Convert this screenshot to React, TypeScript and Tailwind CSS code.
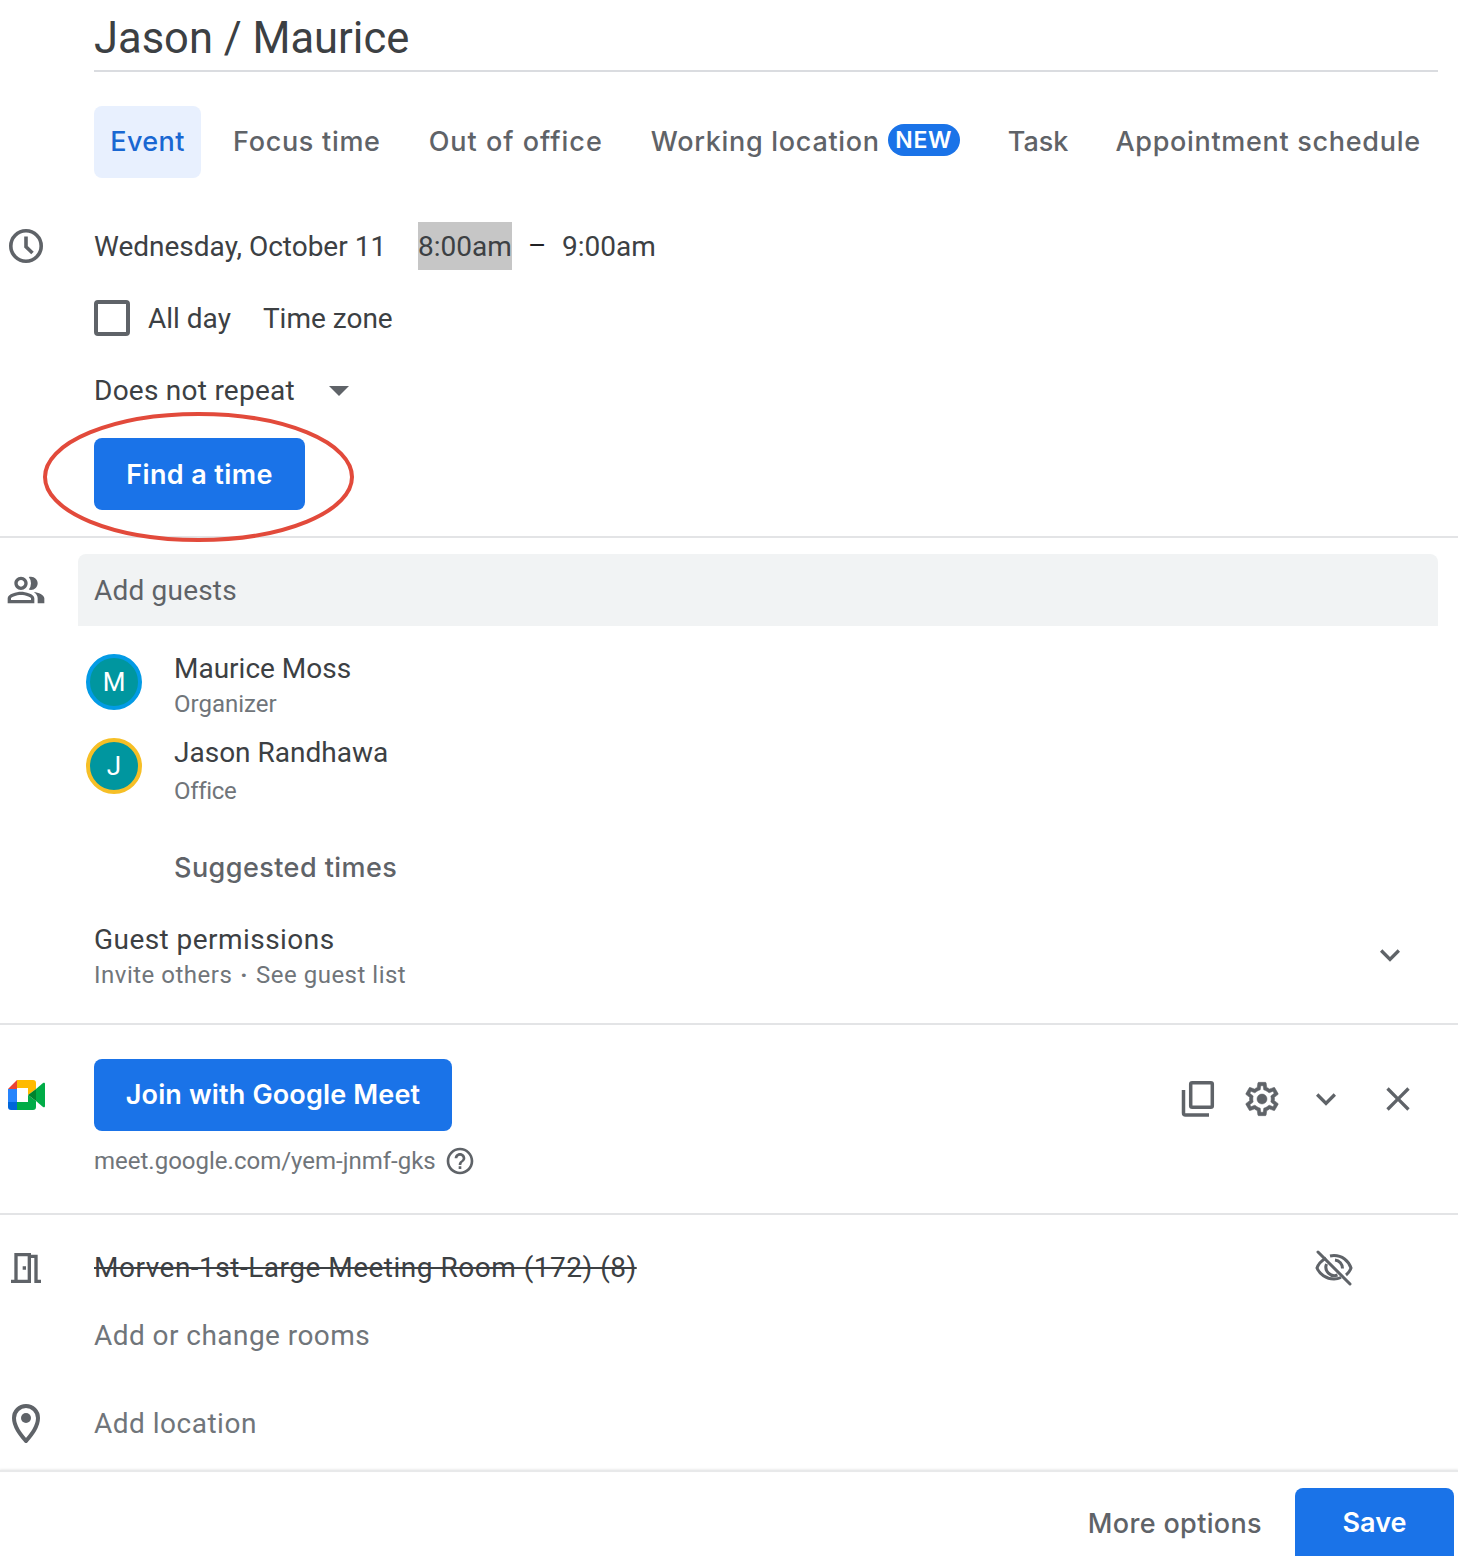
import {
  MdArrowDropDown,
  MdClose,
  MdHelpOutline,
  MdKeyboardArrowDown,
  MdOutlineMeetingRoom,
  MdOutlinePeopleAlt,
} from 'react-icons/md';

function ClockIcon() {
  return (
    <svg width="40" height="40" viewBox="0 0 40 40" fill="none" stroke="#5f6368" strokeWidth="3.6">
      <circle cx="20" cy="20" r="15.200" />
      <path d="M20 10.500v10.300l6.500 6.200" />
    </svg>
  );
}

function MeetLogo() {
  return (
    <svg width="37" height="30" viewBox="0 0 37 30">
      <path d="M0 9 9 0v9z" fill="#ea4335" />
      <path d="M9 0h16a3 3 0 0 1 3 3v6l-8 6V8H9z" fill="#ffba00" />
      <path d="M0 9h9v13H0z" fill="#2684fc" />
      <path d="M0 22h9v8H3a3 3 0 0 1-3-3z" fill="#0066da" />
      <path d="M9 22h11v-7l8 6v6a3 3 0 0 1-3 3H9z" fill="#00ac47" />
      <path d="M20 15l8-6v12z" fill="#00832d" />
      <path d="M28 9l7-6c1-.7 2-.3 2 1v22c0 1.300-1 1.700-2 1l-7-6z" fill="#00ac47" />
    </svg>
  );
}

function CopyIcon() {
  return (
    <svg width="40" height="40" viewBox="0 0 40 40" fill="none" stroke="#5f6368" strokeWidth="3.5">
      <rect x="12.7" y="3.700" width="21.6" height="24.6" rx="1.5" />
      <path d="M5.500 11v23a2 2 0 0 0 2 2H31" />
    </svg>
  );
}

function GearIcon() {
  return (
    <svg width="40" height="40" viewBox="0 0 24 24" fill="#5f6368" stroke="#5f6368" strokeWidth="0.3">
      <path d="M19.43 12.98c.04-.32.07-.64.07-.98 0-.34-.03-.66-.07-.98l2.11-1.65c.19-.15.24-.42.12-.64l-2-3.46c-.09-.16-.26-.25-.44-.25-.06 0-.12.01-.17.03l-2.49 1c-.52-.4-1.08-.73-1.69-.98l-.38-2.65C14.46 2.18 14.25 2 14 2h-4c-.25 0-.46.18-.49.42l-.38 2.65c-.61.25-1.17.59-1.69.98l-2.49-1c-.06-.02-.12-.03-.18-.03-.17 0-.34.09-.43.25l-2 3.46c-.13.22-.07.49.12.64l2.11 1.65c-.04.32-.07.65-.07.98 0 .33.03.66.07.98l-2.11 1.65c-.19.15-.24.42-.12.64l2 3.46c.09.16.26.25.44.25.06 0 .12-.01.17-.03l2.49-1c.52.4 1.08.73 1.69.98l.38 2.65c.03.24.24.42.49.42h4c.25 0 .46-.18.49-.42l.38-2.65c.61-.25 1.17-.59 1.69-.98l2.49 1c.06.02.12.03.18.03.17 0 .34-.09.43-.25l2-3.46c.12-.22.07-.49-.12-.64l-2.11-1.65zm-1.98-1.71c.04.31.05.52.05.73 0 .21-.02.43-.05.73l-.14 1.13.89.7 1.08.84-.7 1.21-1.27-.51-1.04-.42-.9.68c-.43.32-.84.56-1.25.73l-1.06.43-.16 1.13-.2 1.35h-1.4l-.19-1.35-.16-1.13-1.06-.43c-.43-.18-.83-.41-1.23-.71l-.91-.7-1.06.43-1.27.51-.7-1.21 1.08-.84.89-.7-.14-1.13c-.03-.31-.05-.54-.05-.74s.02-.43.05-.73l.14-1.13-.89-.7-1.08-.84.7-1.21 1.27.51 1.04.42.9-.68c.43-.32.84-.56 1.25-.73l1.06-.43.16-1.13.2-1.35h1.39l.19 1.35.16 1.13 1.06.43c.43.18.83.41 1.23.71l.91.7 1.06-.43 1.27-.51.7 1.21-1.07.85-.89.7.14 1.13z" />
      <circle cx="12" cy="12" r="3" />
    </svg>
  );
}

function PlaceIcon() {
  return (
    <svg width="28" height="40" viewBox="0 0 28 40" fill="none">
      <path d="M14 37C9 31 2 23 2 14a12 12 0 0 1 24 0c0 9-7 17-12 23z" stroke="#5f6368" strokeWidth="4" strokeLinejoin="round" />
      <circle cx="14" cy="14" r="5" fill="#5f6368" />
    </svg>
  );
}

function EyeOff() {
  return (
    <svg width="38" height="38" viewBox="0 0 38 38" fill="none" stroke="#5f6368" strokeWidth="3">
      <path d="M3 3l32 32" strokeLinecap="round" />
      <path d="M11 9C6 12 3 16 2 19c2.500 6 9 11 17 11 3 0 5-.6 7-1.500" />
      <path d="M15 7c1.300-.3 2.700-.5 4-.5 8 0 14.500 5 17 12.500-1 2.800-2.700 5.200-5 7" />
      <path d="M11.500 15a8.500 8.500 0 0 0 11 11" />
      <path d="M20 11a8.500 8.500 0 0 1 7.500 8.500" />
    </svg>
  );
}

function Person({ initial, ring, name, role, roleCls }: { initial: string; ring: string; name: string; role: string; roleCls: string }) {
  return (
    <div className="flex h-[84px] pl-[86px]">
      <div className={`mt-[14px] flex h-[56px] w-[56px] items-center justify-center rounded-full border-[4px] bg-[#00969f] text-[26px] text-white ${ring}`}>
        {initial}
      </div>
      <div className="ml-[32px] pt-[11px]">
        <div className="h-[36px] text-[28px] leading-[36px] text-[#3c4043]">{name}</div>
        <div className={`text-[24px] leading-[36px] text-[#70757a] ${roleCls}`}>{role}</div>
      </div>
    </div>
  );
}

export default function App() {
  return (
    <div className="relative h-[1556px] w-[1458px] overflow-hidden bg-white font-['Roboto',sans-serif] text-[#3c4043]">
      {/* 제목 */}
      <div className="ml-[94px] mr-[20px] h-[72px] border-b-2 border-[#dadce0] text-[43.5px] leading-[78px]">
        Jason / Maurice
      </div>

      {/* 탭 */}
      <div className="mt-[34px] flex h-[72px] items-center pl-[94px] font-['Inter',sans-serif] text-[27px] font-medium tracking-[0.7px] text-[#5f6368]">
        <div className="flex h-[72px] w-[107px] items-center justify-center rounded-[8px] bg-[#e8f0fe] tracking-[0.4px] text-[#1967d2]">Event</div>
        <span className="ml-[32px]">Focus time</span>
        <span className="ml-[48px] tracking-[1px]">Out of office</span>
        <span className="ml-[48px]">Working location</span>
        <span className="mb-[4px] ml-[8px] flex h-[32px] w-[72px] items-center justify-center rounded-full bg-[#1a73e8] text-[23px] font-semibold text-white">NEW</span>
        <span className="ml-[48px] tracking-[0px]">Task</span>
        <span className="ml-[47px]">Appointment schedule</span>
      </div>

      {/* 날짜 */}
      <div className="mt-[44px] flex h-[48px] items-center text-[28px]">
        <div className="flex w-[94px] justify-start pl-[6px]">
          <ClockIcon />
        </div>
        <span className="w-[324px] pt-[2px]">Wednesday, October 11</span>
        <span className="flex h-[48px] w-[94px] items-center bg-[#c6c6c6] pt-[2px]">8:00am</span>
        <span className="ml-[16px] w-[14px] font-normal text-[#202124]">–</span>
        <span className="ml-[20px] pt-[2px]">9:00am</span>
      </div>

      <div className="mt-[24px] flex h-[48px] items-center pl-[94px] text-[28px]">
        <div className="h-[36px] w-[36px] rounded-[4px] border-[4px] border-[#5f6368]" />
        <span className="ml-[18px] pt-[2px]">All day</span>
        <span className="ml-[32px] pt-[2px]">Time zone</span>
      </div>

      <div className="mt-[24px] flex h-[48px] items-center pl-[94px] text-[28px]">
        <span className="w-[221px] pt-[2px] tracking-[0.25px]">Does not repeat</span>
        <MdArrowDropDown size={48} color="#5f6368" />
      </div>

      <div className="mt-[24px] pl-[94px]">
        <button className="flex h-[72px] w-[211px] items-center justify-center rounded-[8px] bg-[#1a73e8] pt-[2px] font-['Inter',sans-serif] text-[27px] font-semibold tracking-[0.4px] text-white">
          Find a time
        </button>
      </div>

      {/* 손으로 그린 강조 원 */}
      <svg className="absolute left-[40px] top-[410px]" width="320" height="136" fill="none">
        <ellipse cx="158.500" cy="67" rx="153.500" ry="63" stroke="#e24a3b" strokeWidth="4" />
      </svg>

      <div className="mt-[26px] h-[2px] bg-[#e3e4e6]" />

      {/* 참석자 */}
      <div className="mt-[16px] flex h-[72px] items-center">
        <div className="flex w-[78px] pl-[6px]">
          <MdOutlinePeopleAlt size={40} color="#5f6368" />
        </div>
        <div className="mr-[20px] flex h-[72px] flex-1 items-center rounded-t-[8px] bg-[#f1f3f4] pl-[16px] pt-[2px] text-[28px] tracking-[0.2px] text-[#5f6368]">Add guests</div>
      </div>

      <div className="mt-[14px]">
        <Person initial="M" ring="border-[#039be5]" name="Maurice Moss" role="Organizer" roleCls="-mt-px" />
        <Person initial="J" ring="border-[#f6bf26]" name="Jason Randhawa" role="Office" roleCls="mt-[2px] tracking-[-0.3px]" />
      </div>

      <div className="mt-[42px] h-[36px] pl-[174px] font-['Inter',sans-serif] text-[27px] font-medium leading-[36px] tracking-[0.45px] text-[#5f6368]">Suggested times</div>

      <div className="mt-[36px] flex h-[72px] items-start pl-[94px]">
        <div className="flex-1">
          <div className="h-[36px] text-[28px] leading-[36px] tracking-[0.45px]">Guest permissions</div>
          <div className="-mt-px text-[24px] leading-[36px] tracking-[0.5px] text-[#70757a]">
            Invite others<span className="mx-[8px] font-bold">·</span>See guest list
          </div>
        </div>
        <div className="mr-[48px] mt-[13px]">
          <MdKeyboardArrowDown size={40} color="#5f6368" />
        </div>
      </div>

      <div className="mt-[29px] h-[2px] bg-[#e3e4e6]" />

      {/* Meet */}
      <div className="mt-[34px] flex h-[72px] items-start">
        <div className="flex w-[94px] pl-[8px] pt-[21px]">
          <MeetLogo />
        </div>
        <button className="flex h-[72px] w-[358px] items-center justify-center rounded-[8px] bg-[#1a73e8] font-['Inter',sans-serif] text-[27px] font-semibold tracking-[0.15px] text-white">
          Join with Google Meet
        </button>
        <div className="ml-auto mr-[40px] flex h-[72px] items-center gap-[24px] pt-[8px] text-[#5f6368]">
          <CopyIcon />
          <GearIcon />
          <MdKeyboardArrowDown size={40} />
          <MdClose size={40} className="ml-[8px]" />
        </div>
      </div>

      <div className="mt-[11px] flex h-[36px] items-center pl-[94px] pt-[2px] text-[24px] text-[#70757a]">
        meet.google.com/yem-jnmf-gks
        <MdHelpOutline size={32} color="#5f6368" className="ml-[8px]" />
      </div>

      <div className="mt-[35px] h-[2px] bg-[#e3e4e6]" />

      {/* 회의실 */}
      <div className="mt-[35px] flex h-[36px] items-center text-[28px] tracking-[0.5px]">
        <div className="flex w-[94px] pl-[6px]">
          <MdOutlineMeetingRoom size={40} color="#5f6368" />
        </div>
        <span className="line-through">Morven-1st-Large Meeting Room (172) (8)</span>
        <div className="ml-auto mr-[105px]">
          <EyeOff />
        </div>
      </div>
      <div className="mt-[32px] h-[36px] pl-[94px] text-[28px] leading-[36px] tracking-[0.45px] text-[#70757a]">Add or change rooms</div>

      <div className="mt-[52px] flex h-[36px] items-center text-[28px] tracking-[0.5px] text-[#70757a]">
        <div className="flex w-[94px] pl-[12px]">
          <PlaceIcon />
        </div>
        Add location
      </div>

      {/* 하단 */}
      <div className="mt-[28px] h-[2px] bg-[#e8e9ea] shadow-[0_-1px_2px_rgba(60,64,67,0.1)]" />
      <div className="flex h-[84px] items-start justify-end pr-[4px] pt-[16px]">
        <span className="mr-[33px] flex h-[68px] items-center pt-[4px] font-['Inter',sans-serif] text-[27px] font-medium tracking-[0.35px] text-[#5f6368]">More options</span>
        <button className="flex h-[68px] w-[159px] items-center justify-center rounded-t-[8px] bg-[#1a73e8] pt-[2px] font-['Inter',sans-serif] text-[27px] font-semibold text-white">
          Save
        </button>
      </div>
    </div>
  );
}
